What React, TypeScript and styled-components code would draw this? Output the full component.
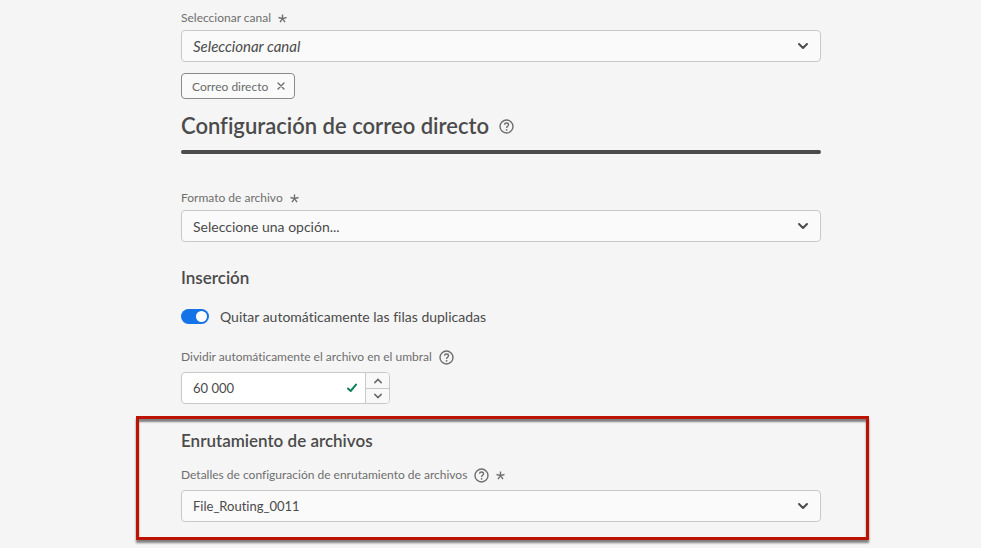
import React, { useState } from "react";
import styled, { createGlobalStyle } from "styled-components";

const GlobalStyle = createGlobalStyle`
  * { box-sizing: border-box; }
  body {
    margin: 0;
    background: #f5f5f5;
    color: #4b4b4b;
    font-family: Lato, "Noto Sans", sans-serif;
    font-size: 14px;
    font-variant-ligatures: none;
  }
  select, input, button { font: inherit; color: inherit; }
`;

const Page = styled.main`
  padding: 8px 160px 8px 181px;
`;

const LabelRow = styled.div<{ $top?: number; $bottom?: number }>`
  display: flex;
  align-items: center;
  gap: 7px;
  height: 20px;
  margin-top: ${(p) => p.$top ?? 0}px;
  margin-bottom: ${(p) => p.$bottom ?? 2}px;
  color: #6e6e6e;
`;

const Label = styled.label`
  font-size: 12px;
  line-height: 20px;
  white-space: nowrap;
`;

const SelectBox = styled.div`
  position: relative;
  height: 32px;
`;

const Select = styled.select<{ $placeholder?: boolean; $size: number }>`
  appearance: none;
  width: 100%;
  height: 32px;
  padding: 0 36px 0 11px;
  border: 1px solid #c8c8c8;
  border-radius: 4px;
  background: #fafafa;
  font-size: ${(p) => p.$size}px;
  font-style: ${(p) => (p.$placeholder ? "italic" : "normal")};
`;

const SelectArrow = styled.svg`
  position: absolute;
  right: 12px;
  top: 12px;
  pointer-events: none;
`;

const Chip = styled.div`
  display: inline-flex;
  align-items: center;
  gap: 9px;
  height: 26px;
  margin-top: 11px;
  padding: 0 9px 0 10px;
  border: 1px solid #8a8a8a;
  border-radius: 4px;
  background: #fafafa;
  color: #6a6a6a;
  font-size: 12px;
`;

const IconButton = styled.button`
  display: flex;
  align-items: center;
  justify-content: center;
  flex: none;
  padding: 0;
  border: 0;
  background: none;
  color: #6e6e6e;
`;

const TitleBar = styled.div`
  height: 4px;
  border-radius: 2px;
  background: #4b4b4b;
`;

const Heading = styled.div`
  display: flex;
  align-items: baseline;
  gap: 10px;
  height: 51px;
  padding-top: 11px;
  & svg { margin-bottom: -3px; }
`;

const Title = styled.h1`
  margin: 0;
  font-size: 22px;
  line-height: 32px;
  font-weight: 600;
  white-space: nowrap;
`;

const Subtitle = styled.h2<{ $top?: number }>`
  margin: ${(p) => p.$top ?? 0}px 0 0;
  font-size: 17px;
  line-height: 24px;
  font-weight: 600;
`;

const ToggleRow = styled.label`
  display: flex;
  align-items: center;
  gap: 11px;
  height: 24px;
  margin-top: 14px;
  font-size: 14px;
`;

const Toggle = styled.input`
  appearance: none;
  display: flex;
  align-items: center;
  width: 28px;
  height: 15px;
  margin: 0;
  padding: 0 2px;
  border-radius: 8px;
  background: #b3b3b3;
  &::before {
    content: "";
    width: 11px;
    height: 11px;
    border-radius: 50%;
    background: #fff;
  }
  &:checked {
    justify-content: flex-end;
    background: #1473e6;
  }
`;

const NumberField = styled.div`
  display: flex;
  align-items: center;
  width: 209px;
  height: 32px;
  border: 1px solid #c8c8c8;
  border-radius: 4px;
  background: #fff;
  overflow: hidden;
`;

const NumberInput = styled.input`
  flex: 1;
  min-width: 0;
  padding: 0 0 0 11px;
  border: 0;
  outline: 0;
  background: none;
  font-size: 13px;
`;

const Steppers = styled.div`
  display: grid;
  grid-template-rows: 1fr 1fr;
  width: 24px;
  height: 100%;
  margin-left: 7px;
  border-left: 1px solid #c8c8c8;
  background: #f8f8f8;
`;

const Step = styled(IconButton)`
  & + & { border-top: 1px solid #c8c8c8; }
`;

const Highlight = styled.section`
  margin: 12px -48px 0 -45px;
  padding: 10px 45px 15px 42px;
  border: 3px solid #bb1204;
  box-shadow: 0 3px 2px #808080, inset 0 3px 2px #808080;
`;

const Help = () => (
  <IconButton type="button" aria-label="Ayuda">
    <svg width="15" height="15" viewBox="0 0 15 15" fill="none" stroke="currentColor" strokeWidth="1.4">
      <circle cx="7.5" cy="7.5" r="6.5" />
      <path d="M5.5 5.8C5.6 4.6 6.4 4 7.5 4c1.2 0 2 .7 2 1.7 0 1.5-1.9 1.6-1.9 3.2" />
      <circle cx="7.6" cy="10.8" r=".9" fill="currentColor" stroke="none" />
    </svg>
  </IconButton>
);

const Asterisk = () => (
  <svg width="9" height="9" viewBox="0 0 9 9" fill="none" stroke="#6e6e6e" strokeWidth="1.4" aria-hidden="true">
    <path d="M4.5 4.7V.6M4.5 4.7L.5 3.5M4.5 4.7l4-1.2M4.5 4.7L2 8.2M4.5 4.7L7 8.2" />
  </svg>
);

const Arrow = () => (
  <SelectArrow width="12" height="8" viewBox="0 0 12 8" fill="none" stroke="#4b4b4b" strokeWidth="2" strokeLinecap="round" strokeLinejoin="round" aria-hidden="true">
    <path d="M2 2l4 4 4-4" />
  </SelectArrow>
);

type DropdownProps = { id: string; text: string; placeholder?: boolean; size: number };

const Dropdown = ({ id, text, placeholder, size }: DropdownProps) => (
  <SelectBox>
    <Select id={id} $placeholder={placeholder} $size={size}>
      <option>{text}</option>
    </Select>
    <Arrow />
  </SelectBox>
);

export default function App() {
  const [dedupe, setDedupe] = useState(true);
  const [threshold, setThreshold] = useState("60 000");
  const step = (by: number) =>
    setThreshold((v) => String(Number(v.replace(/\s/g, "")) + by).replace(/\B(?=(\d{3})+$)/g, " "));

  return (
    <>
      <GlobalStyle />
      <Page>
        <LabelRow>
          <Label htmlFor="channel">Seleccionar canal</Label>
          <Asterisk />
        </LabelRow>
        <Dropdown id="channel" text="Seleccionar canal" placeholder size={15} />
        <Chip>
          Correo directo
          <IconButton type="button" aria-label="Quitar Correo directo">
            <svg width="8" height="8" viewBox="0 0 8 8" stroke="currentColor" strokeWidth="1.4" strokeLinecap="round">
              <path d="M1 1l6 6M7 1L1 7" />
            </svg>
          </IconButton>
        </Chip>

        <Heading>
          <Title>Configuración de correo directo</Title>
          <Help />
        </Heading>
        <TitleBar />

        <LabelRow $top={34}>
          <Label htmlFor="format">Formato de archivo</Label>
          <Asterisk />
        </LabelRow>
        <Dropdown id="format" text="Seleccione una opción..." size={14} />

        <Subtitle $top={24}>Inserción</Subtitle>
        <ToggleRow>
          <Toggle type="checkbox" role="switch" checked={dedupe} onChange={(e) => setDedupe(e.target.checked)} />
          Quitar automáticamente las filas duplicadas
        </ToggleRow>

        <LabelRow $top={19} $bottom={5}>
          <Label htmlFor="threshold">Dividir automáticamente el archivo en el umbral</Label>
          <Help />
        </LabelRow>
        <NumberField>
          <NumberInput id="threshold" value={threshold} onChange={(e) => setThreshold(e.target.value)} />
          <svg width="12" height="10" viewBox="0 0 12 10" fill="none" stroke="#12805c" strokeWidth="2" strokeLinecap="round" strokeLinejoin="round" aria-hidden="true">
            <path d="M2 5.5L4.7 8 10 1.6" />
          </svg>
          <Steppers>
            <Step type="button" aria-label="Aumentar" onClick={() => step(1)}>
              <svg width="10" height="6" viewBox="0 0 10 6" fill="none" stroke="currentColor" strokeWidth="1.6" strokeLinecap="round">
                <path d="M1.8 4.6L5 1.4l3.2 3.2" />
              </svg>
            </Step>
            <Step type="button" aria-label="Disminuir" onClick={() => step(-1)}>
              <svg width="10" height="6" viewBox="0 0 10 6" fill="none" stroke="currentColor" strokeWidth="1.6" strokeLinecap="round">
                <path d="M1.8 1.4L5 4.6l3.2-3.2" />
              </svg>
            </Step>
          </Steppers>
        </NumberField>

        <Highlight>
          <Subtitle>Enrutamiento de archivos</Subtitle>
          <LabelRow $top={12} $bottom={5}>
            <Label htmlFor="routing">Detalles de configuración de enrutamiento de archivos</Label>
            <Help />
            <Asterisk />
          </LabelRow>
          <Dropdown id="routing" text="File_Routing_0011" size={13} />
        </Highlight>
      </Page>
    </>
  );
}
